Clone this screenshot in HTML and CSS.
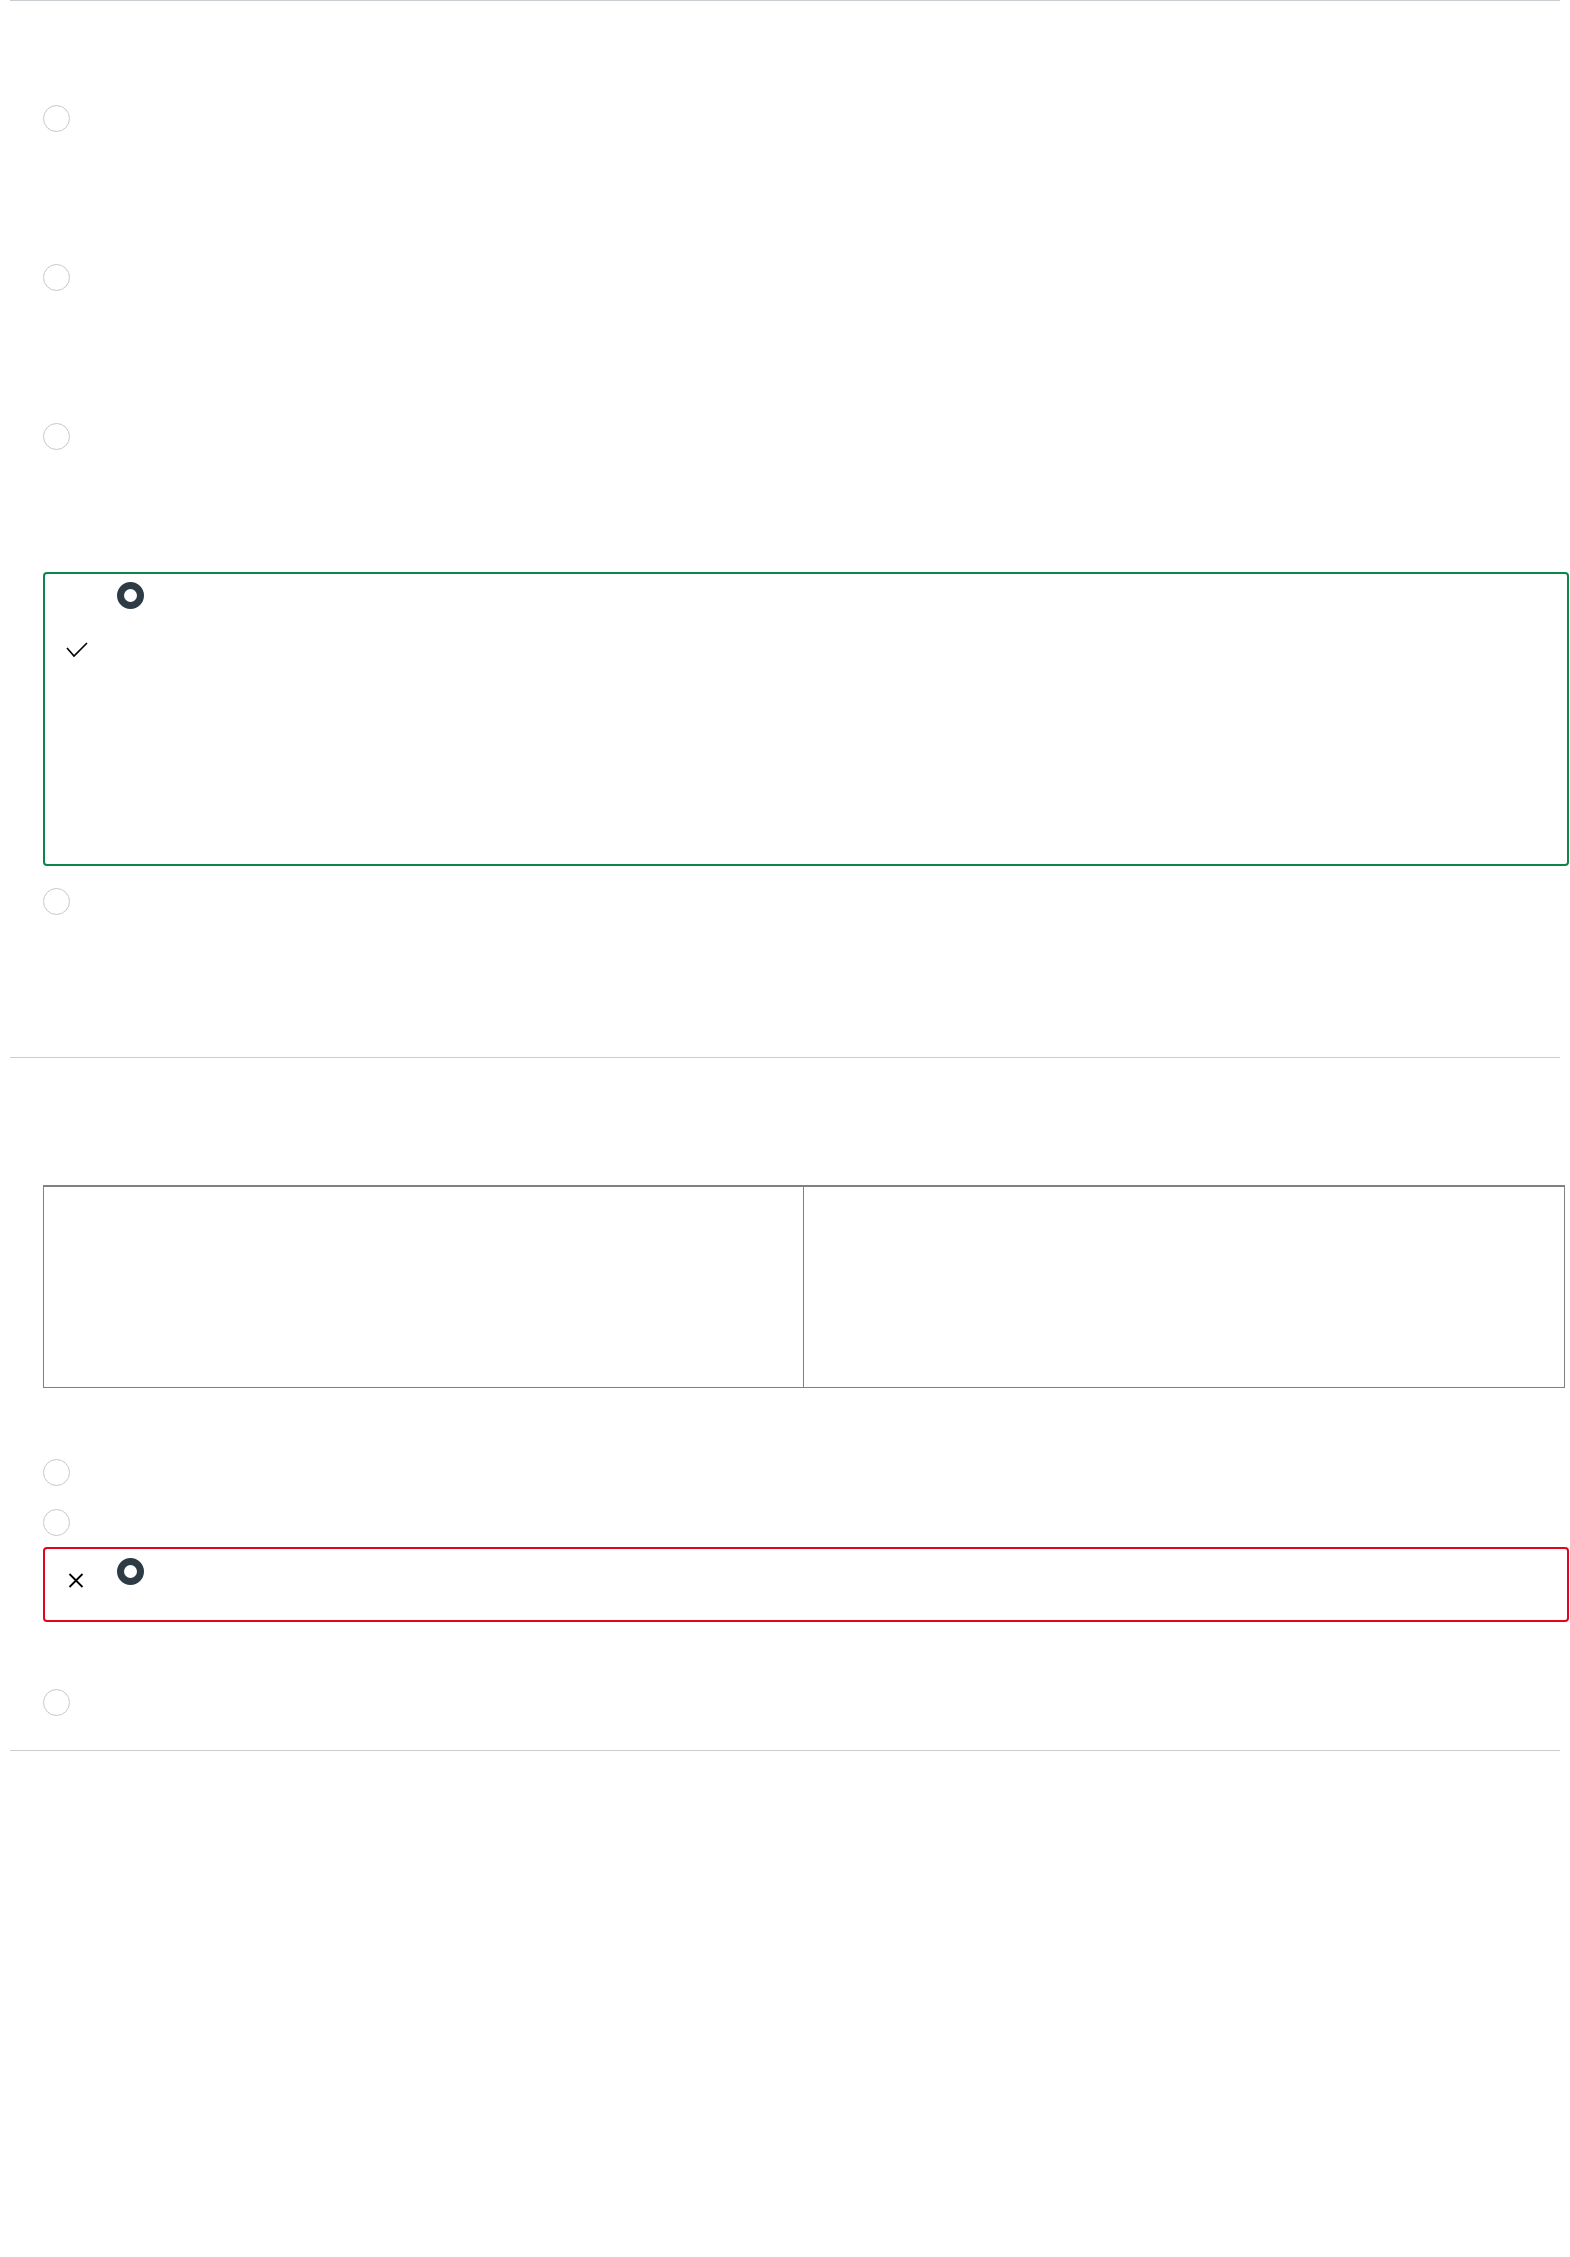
FILE: index.html
```html
<!DOCTYPE html>
<html lang="en">
<head>
<meta charset="utf-8">
<title>Quiz results</title>
<link rel="stylesheet" href="styles.css">
</head>
<body>
<div class="page">
  <hr class="rule">
  <section class="question q1">
    <div class="answers">
      <div class="answer tall"><span class="radio"></span></div>
      <div class="answer tall"><span class="radio"></span></div>
      <div class="answer tall"><span class="radio"></span></div>
      <div class="answer box correct">
        <span class="mark mark-check"><svg width="22" height="16" viewBox="0 0 22 16"><polyline points="1,6 8,14 21,1" fill="none" stroke="#000" stroke-width="1.6"/></svg></span>
        <span class="radio checked"></span>
      </div>
      <div class="answer tall after-box"><span class="radio"></span></div>
    </div>
  </section>
  <hr class="rule">
  <section class="question q2">
    <table class="matrix">
      <colgroup><col class="col-left"><col></colgroup>
      <tr><td></td><td></td></tr>
    </table>
    <div class="answers compact">
      <div class="answer c1"><span class="radio"></span></div>
      <div class="answer c2"><span class="radio"></span></div>
      <div class="answer box wrong">
        <span class="mark mark-x"><svg width="16" height="15" viewBox="0 0 16 15"><path d="M1.5 1 L14.5 14 M14.5 1 L1.5 14" fill="none" stroke="#000" stroke-width="1.8"/></svg></span>
        <span class="radio checked"></span>
      </div>
      <div class="answer c4"><span class="radio"></span></div>
    </div>
  </section>
  <hr class="rule">
</div>
</body>
</html>
```

FILE: styles.css
```css
html, body {
  margin: 0;
  padding: 0;
  background: #ffffff;
  font-family: "Lato", "Liberation Sans", sans-serif;
}

.page {
  padding-left: 10px;
  width: 1550px;
}

.rule {
  display: block;
  height: 1px;
  margin: 0;
  border: 0;
  background: #c7cdd1;
}

.answers {
  margin-left: 33px;
  width: 1526px;
  display: flex;
  flex-direction: column;
}

.radio {
  display: block;
  box-sizing: border-box;
  width: 27px;
  height: 27px;
  border: 1px solid #c2c9ce;
  border-radius: 50%;
  background: #fff;
}

.radio.checked {
  border: 7px solid #2d3b45;
}

/* question 1 */
.q1 {
  padding-top: 94px;
  padding-bottom: 20px;
}

.answer.tall {
  box-sizing: border-box;
  height: 159px;
  padding-top: 10px;
}

.answer.box {
  position: relative;
  box-sizing: border-box;
  border-width: 2px;
  border-style: solid;
  border-radius: 4px;
  padding-left: 72px;
}

.answer.correct {
  height: 294px;
  padding-top: 8px;
  border-color: #0b874b;
  margin-bottom: 12px;
}

.mark {
  position: absolute;
  display: block;
  line-height: 0;
}

.mark-check {
  left: 21px;
  top: 68px;
}

.mark-x {
  left: 23px;
  top: 24px;
}

/* question 2 */
.q2 {
  padding-top: 127px;
  padding-bottom: 34px;
}

.matrix {
  margin-left: 33px;
  width: 1522px;
  height: 203px;
  border-collapse: collapse;
  table-layout: fixed;
  border-top: 2px solid #808080;
}

.matrix .col-left {
  width: 760px;
}

.matrix td {
  border: 1px solid #808080;
  padding: 0;
}

.compact {
  margin-top: 71px;
}

.answer.c2 {
  margin-top: 23px;
  margin-bottom: 11px;
}

.answer.wrong {
  height: 75px;
  padding-top: 9px;
  border-color: #e0061f;
}

.answer.c4 {
  margin-top: 67px;
}
```
